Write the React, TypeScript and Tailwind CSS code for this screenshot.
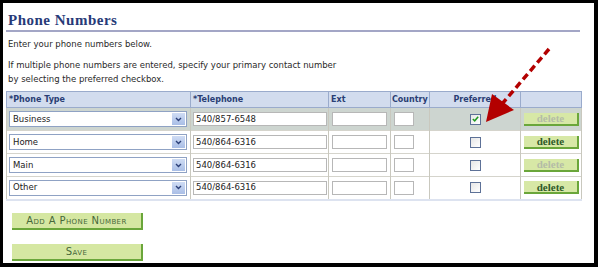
import React from "react";

interface PhoneRow {
  type: string;
  phone: string;
  preferred: boolean;
  canDelete: boolean;
}

const rows: PhoneRow[] = [
  { type: "Business", phone: "540/857-6548", preferred: true, canDelete: false },
  { type: "Home", phone: "540/864-6316", preferred: false, canDelete: true },
  { type: "Main", phone: "540/864-6316", preferred: false, canDelete: false },
  { type: "Other", phone: "540/864-6316", preferred: false, canDelete: true },
];

const sans = "font-['DejaVu_Sans',Verdana,sans-serif]";

const Select = ({ value }: { value: string }) => (
  <div className="flex h-[16px] w-[178px] items-center border border-[#8fa2c4] bg-white">
    <span className={`flex-1 pl-[3px] text-[8.5px] text-[#222] ${sans}`}>{value}</span>
    <span className="mr-[1px] flex h-[12px] w-[13px] items-center justify-center bg-gradient-to-b from-[#cfdcf4] to-[#a9bee6]">
      <svg width="7" height="5" viewBox="0 0 7 5">
        <path d="M1 1 L3.5 3.5 L6 1" fill="none" stroke="#2b3f78" strokeWidth="1.4" />
      </svg>
    </span>
  </div>
);

const Input = ({ value, w }: { value?: string; w: string }) => (
  <div className={`flex h-[14px] items-center border border-[#b7b7b7] bg-white ${w}`}>
    <span className={`pl-[2px] text-[8.5px] text-[#222] ${sans}`}>{value}</span>
  </div>
);

const Checkbox = ({ checked }: { checked: boolean }) => (
  <div className="mx-auto flex h-[11px] w-[11px] items-center justify-center border border-[#5d7197] bg-gradient-to-br from-[#e6e6e6] to-[#ffffff]">
    {checked && (
      <svg width="7" height="6" viewBox="0 0 7 6">
        <path d="M0.8 3 L2.7 4.8 L6.2 0.8" fill="none" stroke="#1f9a1f" strokeWidth="1.5" />
      </svg>
    )}
  </div>
);

const DeleteButton = ({ enabled }: { enabled: boolean }) => (
  <div
    className={`ml-[3px] flex h-[13px] w-[55px] items-center justify-center border-b-2 border-r-2 border-[#6aa63a] bg-[#d7e8a6] font-['Liberation_Serif',serif] text-[11px] font-bold ${
      enabled ? "text-[#2f5a2a]" : "text-[#b4bca6]"
    }`}
  >
    delete
  </div>
);

const GreenButton = ({ children }: { children: React.ReactNode }) => (
  <div
    className={`flex h-[17px] w-[131px] items-center justify-center border-b-2 border-r-2 border-[#6aa63a] bg-[#d5e7a2] text-[10px] tracking-[0.4px] text-[#46683a] [font-variant:small-caps] ${sans}`}
  >
    {children}
  </div>
);

export default function App() {
  return (
    <div className="relative h-[269px] w-[600px] overflow-hidden bg-white">
      <div className="h-[267px] w-[598px] border-b-[4px] border-l-[3px] border-r-[4px] border-t-[3px] border-black">
        <div className="pl-[3px] pr-[14px] pt-[9px]">
          <h1 className="border-b-2 border-[#a3a6c6] pb-[1px] pl-[2px] font-['Liberation_Serif',serif] text-[15px] font-bold leading-[17px] tracking-[0.5px] text-[#273a78]">
            Phone Numbers
          </h1>
          <div className={`pl-[2px] text-[8.5px] text-[#2a2a2a] ${sans}`}>
            <p className="mt-[5px] leading-[14px]">Enter your phone numbers below.</p>
            <p className="mt-[7px] leading-[14px]">
              If multiple phone numbers are entered, specify your primary contact number
            </p>
            <p className="leading-[14px]">by selecting the preferred checkbox.</p>
          </div>

          <table className="mt-[5px] w-[575px] table-fixed border-collapse">
            <colgroup>
              <col className="w-[184px]" />
              <col className="w-[138px]" />
              <col className="w-[62px]" />
              <col className="w-[39px]" />
              <col className="w-[91px]" />
              <col className="w-[61px]" />
            </colgroup>
            <thead>
              <tr className={`h-[16px] bg-[#d2dcee] text-left text-[8px] font-bold text-[#2a3e74] ${sans}`}>
                <th className="border border-[#9aabcc] pl-[2px] font-bold">*Phone Type</th>
                <th className="border border-[#9aabcc] pl-[2px] font-bold">*Telephone</th>
                <th className="border border-[#9aabcc] pl-[2px] font-bold">Ext</th>
                <th className="border border-[#9aabcc] pl-[1px] font-bold">Country</th>
                <th className="border border-[#9aabcc] text-center font-bold">Preferred</th>
                <th className="border border-[#9aabcc]"></th>
              </tr>
            </thead>
            <tbody>
              {rows.map((r, i) => (
                <tr
                  key={i}
                  className={`h-[23px] border-b border-[#d5d4cc] ${i === 0 ? "bg-[#cdd5d0]" : "bg-white"} ${
                    i === rows.length - 1 ? "border-b-2 border-b-[#dde3f0]" : ""
                  }`}
                >
                  <td className="border-l border-r border-[#c9c8be] pl-[2px]">
                    <Select value={r.type} />
                  </td>
                  <td className="border-r border-[#c9c8be] pl-[2px]">
                    <Input value={r.phone} w="w-[134px]" />
                  </td>
                  <td className="border-r border-[#c9c8be] pl-[3px]">
                    <Input w="w-[55px]" />
                  </td>
                  <td className="border-r border-[#c9c8be] pl-[3px]">
                    <Input w="w-[20px]" />
                  </td>
                  <td className="border-r border-[#c9c8be]">
                    <Checkbox checked={r.preferred} />
                  </td>
                  <td className="border-r border-[#c9c8be]">
                    <DeleteButton enabled={r.canDelete} />
                  </td>
                </tr>
              ))}
            </tbody>
          </table>

          <div className="ml-[6px] mt-[12px] flex flex-col gap-[14px]">
            <GreenButton>Add A Phone Number</GreenButton>
            <GreenButton>Save</GreenButton>
          </div>
        </div>
      </div>

      {/* red callout arrow */}
      <svg className="absolute left-[480px] top-[44px]" width="80" height="84" viewBox="0 0 80 84">
        <line x1="69" y1="5" x2="22" y2="60" stroke="#b30000" strokeWidth="3.5" strokeDasharray="7 4" />
        <polygon points="6,78 12,50 34,66" fill="#b30000" />
      </svg>
    </div>
  );
}
